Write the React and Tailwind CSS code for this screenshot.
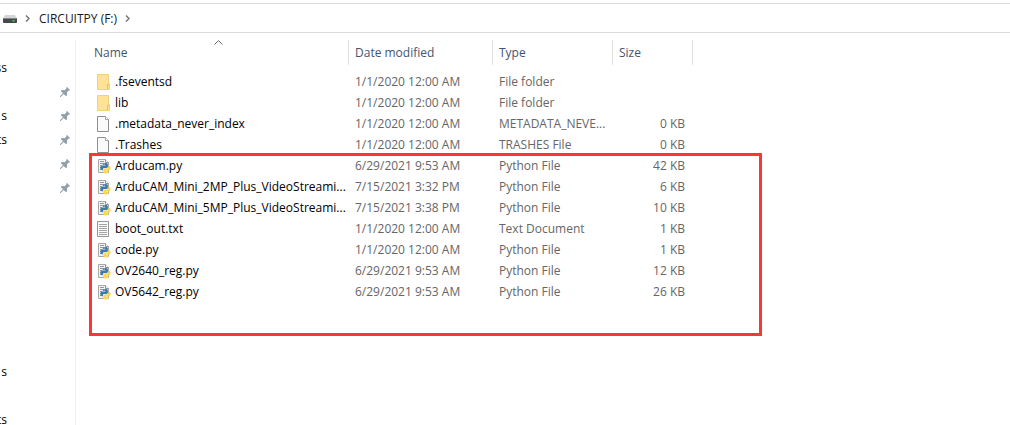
import React from 'react';

const files = [
  { name: '.fseventsd', date: '1/1/2020 12:00 AM', type: 'File folder', size: '', icon: 'folder' },
  { name: 'lib', date: '1/1/2020 12:00 AM', type: 'File folder', size: '', icon: 'folder' },
  { name: '.metadata_never_index', date: '1/1/2020 12:00 AM', type: 'METADATA_NEVE...', size: '0 KB', icon: 'blank' },
  { name: '.Trashes', date: '1/1/2020 12:00 AM', type: 'TRASHES File', size: '0 KB', icon: 'blank' },
  { name: 'Arducam.py', date: '6/29/2021 9:53 AM', type: 'Python File', size: '42 KB', icon: 'python' },
  { name: 'ArduCAM_Mini_2MP_Plus_VideoStreami...', date: '7/15/2021 3:32 PM', type: 'Python File', size: '6 KB', icon: 'python' },
  { name: 'ArduCAM_Mini_5MP_Plus_VideoStreami...', date: '7/15/2021 3:38 PM', type: 'Python File', size: '10 KB', icon: 'python' },
  { name: 'boot_out.txt', date: '1/1/2020 12:00 AM', type: 'Text Document', size: '1 KB', icon: 'text' },
  { name: 'code.py', date: '1/1/2020 12:00 AM', type: 'Python File', size: '1 KB', icon: 'python' },
  { name: 'OV2640_reg.py', date: '6/29/2021 9:53 AM', type: 'Python File', size: '12 KB', icon: 'python' },
  { name: 'OV5642_reg.py', date: '6/29/2021 9:53 AM', type: 'Python File', size: '26 KB', icon: 'python' },
];

const quickAccess = [
  { label: 'ss', pinned: false },
  { label: '', pinned: true },
  { label: 's', pinned: true },
  { label: 'ts', pinned: true },
  { label: '', pinned: true },
  { label: '', pinned: true },
];

const thisPc = ['s', '', 'ts'];

function FolderIcon() {
  return (
    <svg width="14" height="16" viewBox="0 0 14 16" className="shrink-0">
      <path d="M0.5 0.5H11.5V9.5H12.5V15.5H0.5Z" fill="#ffe294" stroke="#f0d078" />
      <path d="M10.5 15V10.5H12" fill="none" stroke="#e6c25a" />
    </svg>
  );
}

function BlankIcon() {
  return (
    <svg width="14" height="16" viewBox="0 0 14 16" className="shrink-0">
      <path d="M0.5 0.5H8.5L11.5 3.5V15.5H0.5Z" fill="#fafafa" stroke="#8f8f8f" />
      <path d="M8.5 0.5V3.5H11.5" fill="#fff" stroke="#a5a5a5" />
    </svg>
  );
}

function TextIcon() {
  return (
    <svg width="14" height="16" viewBox="0 0 14 16" className="shrink-0">
      <path d="M0.5 0.5H11.5V15.5H0.5Z" fill="#fafafa" stroke="#959595" />
      <path d="M2 3.5H10M2 5.5H10M2 7.5H10M2 9.5H10M2 11.5H10M2 13.5H10" stroke="#a3a3a3" />
    </svg>
  );
}

function PythonIcon() {
  return (
    <svg width="14" height="16" viewBox="0 0 14 16" className="shrink-0">
      <path d="M1.5 1.5H8.5L11.5 4.5V14.5H1.5Z" fill="#f2f2f2" stroke="#a8a8a8" />
      <path d="M8.5 1.5V4.5H11.5" fill="#fff" stroke="#8f8f8f" />
      <path d="M3 3.5H7M3 5.5H7M3 7.5H5M3 9.5H4M3 11.5H4" stroke="#969696" />
      {/* the two snakes */}
      <path d="M5.8 6.6Q5.8 5 7.4 5H9.2Q10.9 5 10.9 6.6V8.6Q10.9 9.9 9.6 9.9H7.2Q5.9 9.9 5.9 11.2V12.3H5Q3.3 12.3 3.3 9.9Q3.3 7.6 5 7.6H8.4V7.1H5.8Z" fill="#3b79ae" />
      <path d="M11.5 7.7H12Q13.6 7.7 13.6 10.1Q13.6 12.4 12 12.4H9V12.9H11.3V13.8Q11.3 15.4 9.6 15.4H8Q6.4 15.4 6.4 13.8V11.8Q6.4 10.5 7.7 10.5H10.2Q11.5 10.5 11.5 9.2Z" fill="#ffd748" />
      <circle cx="7.2" cy="6.1" r="0.5" fill="#fff" />
    </svg>
  );
}

const icons = {
  folder: FolderIcon,
  blank: BlankIcon,
  text: TextIcon,
  python: PythonIcon,
};

function PinIcon() {
  return (
    <svg width="10" height="10" viewBox="0 0 10 10" className="shrink-0">
      <path d="M7.1 0L10 2.9L9.2 3.7L8.6 3.5L6.9 5.4L7 8.2L6 9.2L3.7 6.9L0.7 10L0 10L0 9.3L3 6.2L0.7 4L1.7 3L4.5 3.2L6.5 1.4L6.3 0.8Z" fill="#929da6" />
    </svg>
  );
}

function DriveIcon() {
  return (
    <svg width="14" height="8" viewBox="0 0 14 8" className="shrink-0">
      <path d="M2 0H12L14 4H0Z" fill="#d3d5d6" />
      <rect y="3" width="14" height="5" rx="0.8" fill="#45494b" />
      <path d="M0.5 3.5H13.5" stroke="#83888a" />
      <rect x="9.5" y="5" width="2" height="1.4" fill="#3fe04c" />
    </svg>
  );
}

function Crumb() {
  return (
    <svg width="5" height="7" viewBox="0 0 5 7" className="shrink-0">
      <path d="M1 0.5L4 3.5L1 6.5" fill="none" stroke="#777" strokeWidth="1.5" />
    </svg>
  );
}

function SideItem({ label, pinned }) {
  return (
    <li className="flex h-6 items-center justify-between pr-[5px]">
      <span className="flex w-[7px] justify-end whitespace-nowrap text-black">{label}</span>
      {pinned && <PinIcon />}
    </li>
  );
}

export default function App() {
  return (
    <div className="flex min-h-screen flex-col overflow-hidden bg-white pt-[3px] font-['Open_Sans','Noto_Sans',sans-serif] text-[12px] leading-4 text-black">
      {/* Address bar */}
      <nav className="flex h-[30px] items-center border-y border-[#d9d9d9] pt-px pl-[3px]">
        <DriveIcon />
        <span className="flex w-[22px] justify-center pr-[2px]">
          <Crumb />
        </span>
        <a href="#drive" className="text-[#1a1a1a]">CIRCUITPY (F:)</a>
        <span className="flex w-[22px] justify-center pr-[2px]">
          <Crumb />
        </span>
      </nav>

      <div className="flex flex-1">
        {/* Navigation pane */}
        <aside className="mt-[7px] w-[76px] shrink-0 border-r border-[#f0f0f0] pt-4">
          <ul>
            {quickAccess.map((item, i) => (
              <SideItem key={i} label={item.label} pinned={item.pinned} />
            ))}
          </ul>
          <ul className="pt-40">
            {thisPc.map((label, i) => (
              <SideItem key={i} label={label} />
            ))}
          </ul>
        </aside>

        {/* File list */}
        <main className="relative min-w-0 flex-1 pt-[7px]">
          <table className="w-[617px] table-fixed border-separate border-spacing-0 whitespace-nowrap text-left">
            <colgroup>
              <col className="w-[273px]" />
              <col className="w-[144px]" />
              <col className="w-[120px]" />
              <col className="w-[80px]" />
            </colgroup>
            <thead className="text-[#44546f]">
              <tr className="h-[25px]">
                <th className="relative border-r border-[#e2e2e2] p-0 pl-[18px] font-normal">
                  Name
                  <svg width="9" height="5" viewBox="0 0 9 5" className="absolute top-0 left-[138px]">
                    <path d="M0.5 4.5L4.5 0.5L8.5 4.5" fill="none" stroke="#6b6b6b" />
                  </svg>
                </th>
                <th className="border-r border-[#e2e2e2] p-0 pl-[6px] font-normal">Date modified</th>
                <th className="border-r border-[#e2e2e2] p-0 pl-[6px] font-normal">Type</th>
                <th className="border-r border-[#e2e2e2] p-0 pl-[6px] font-normal">Size</th>
              </tr>
            </thead>
            <tbody className="text-[#666666] before:block before:h-[6px]">
              {files.map((file) => {
                const Icon = icons[file.icon];
                return (
                  <tr key={file.name} className="h-[21px]">
                    <td className="p-0 pl-[21px]">
                      <div className="flex items-center gap-1 text-black">
                        <Icon />
                        <span>{file.name}</span>
                      </div>
                    </td>
                    <td className="p-0 pl-[6px]">{file.date}</td>
                    <td className="p-0 pl-[6px]">{file.type}</td>
                    <td className="p-0 pr-2 text-right">{file.size}</td>
                  </tr>
                );
              })}
            </tbody>
          </table>

          {/* Highlight over the copied files */}
          <div className="pointer-events-none absolute top-[120px] left-[13px] h-[183px] w-[673px] border-3 border-[#fb3636]"></div>
        </main>
      </div>
    </div>
  );
}
